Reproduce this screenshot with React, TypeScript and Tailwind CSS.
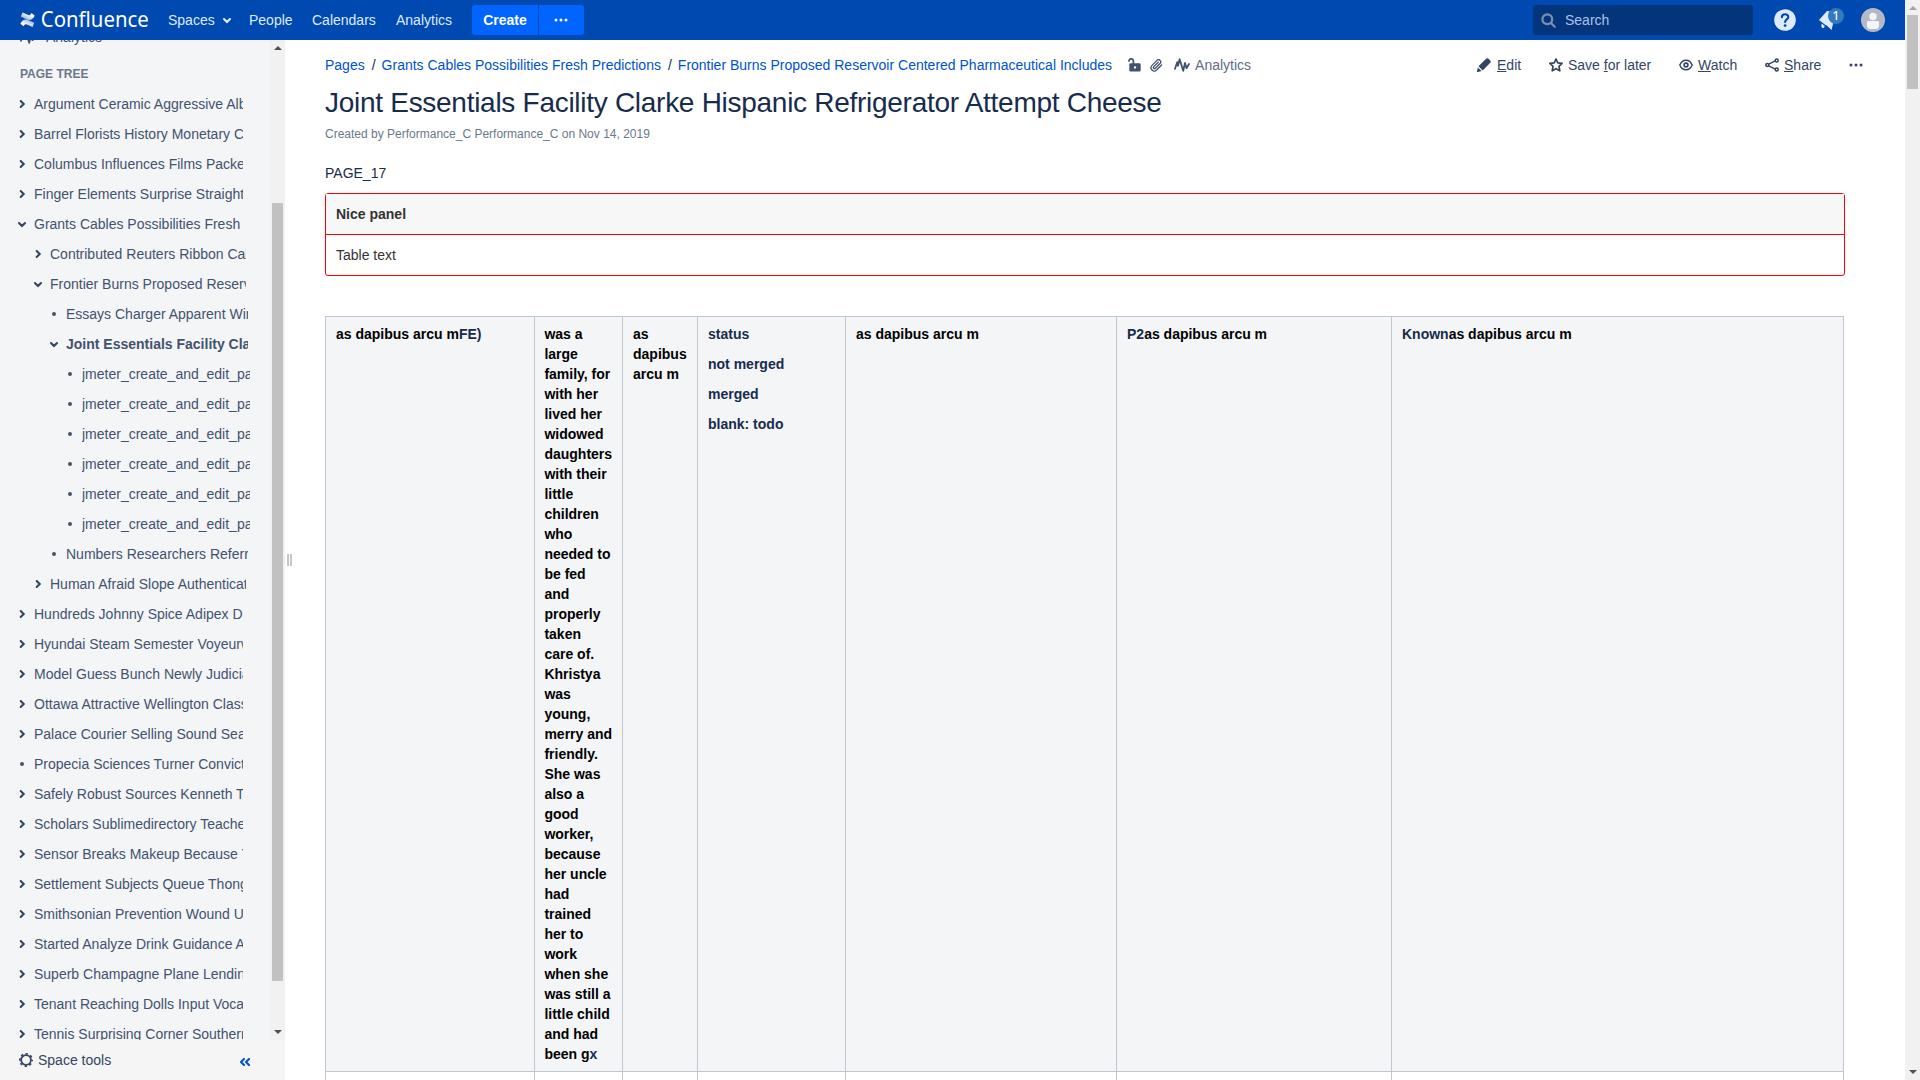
import type { ReactNode } from "react";

type Kind = "closed" | "open" | "leaf";
type TreeRow = { label: string; kind: Kind; depth: 0 | 1 | 2 | 3; current?: boolean };

const JMETER: TreeRow[] = Array.from({ length: 6 }, () => ({
  label: "jmeter_create_and_edit_page",
  kind: "leaf",
  depth: 3,
}));

const TREE: TreeRow[] = [
  { label: "Argument Ceramic Aggressive Albums", kind: "closed", depth: 0 },
  { label: "Barrel Florists History Monetary Crude", kind: "closed", depth: 0 },
  { label: "Columbus Influences Films Packet", kind: "closed", depth: 0 },
  { label: "Finger Elements Surprise Straight", kind: "closed", depth: 0 },
  { label: "Grants Cables Possibilities Fresh", kind: "open", depth: 0 },
  { label: "Contributed Reuters Ribbon Calm", kind: "closed", depth: 1 },
  { label: "Frontier Burns Proposed Reservoir", kind: "open", depth: 1 },
  { label: "Essays Charger Apparent Winds", kind: "leaf", depth: 2 },
  { label: "Joint Essentials Facility Clarke", kind: "open", depth: 2, current: true },
  ...JMETER,
  { label: "Numbers Researchers Referred", kind: "leaf", depth: 2 },
  { label: "Human Afraid Slope Authentication", kind: "closed", depth: 1 },
  { label: "Hundreds Johnny Spice Adipex D", kind: "closed", depth: 0 },
  { label: "Hyundai Steam Semester Voyeurweb", kind: "closed", depth: 0 },
  { label: "Model Guess Bunch Newly Judicial", kind: "closed", depth: 0 },
  { label: "Ottawa Attractive Wellington Classes", kind: "closed", depth: 0 },
  { label: "Palace Courier Selling Sound Search", kind: "closed", depth: 0 },
  { label: "Propecia Sciences Turner Convicted", kind: "leaf", depth: 0 },
  { label: "Safely Robust Sources Kenneth T", kind: "closed", depth: 0 },
  { label: "Scholars Sublimedirectory Teachers", kind: "closed", depth: 0 },
  { label: "Sensor Breaks Makeup Because Y", kind: "closed", depth: 0 },
  { label: "Settlement Subjects Queue Thongs", kind: "closed", depth: 0 },
  { label: "Smithsonian Prevention Wound U", kind: "closed", depth: 0 },
  { label: "Started Analyze Drink Guidance A", kind: "closed", depth: 0 },
  { label: "Superb Champagne Plane Lending", kind: "closed", depth: 0 },
  { label: "Tenant Reaching Dolls Input Vocals", kind: "closed", depth: 0 },
  { label: "Tennis Surprising Corner Southern", kind: "closed", depth: 0 },
];

const DEPTH = [
  { pad: "pl-4", clip: "w-[209px]" },
  { pad: "pl-8", clip: "w-[196px]" },
  { pad: "pl-12", clip: "w-[182px]" },
  { pad: "pl-16", clip: "w-[168px]" },
];

function Chevron({ down = false, className = "" }: { down?: boolean; className?: string }) {
  return (
    <svg viewBox="0 0 12 12" className={`h-3 w-3 ${className}`} fill="none" stroke="currentColor" strokeWidth="2.1" strokeLinecap="round">
      <path d={down ? "M3 5l3 3 3-3" : "M4.7 3l3 3-3 3"} />
    </svg>
  );
}

function Dots({ className = "" }: { className?: string }) {
  return (
    <svg viewBox="0 0 14 4" className={`h-1 w-3.5 ${className}`} fill="currentColor">
      <circle cx="2" cy="2" r="1.5" />
      <circle cx="7" cy="2" r="1.5" />
      <circle cx="12" cy="2" r="1.5" />
    </svg>
  );
}

function Pulse({ className = "" }: { className?: string }) {
  return (
    <svg viewBox="0 0 16 14" className={className} fill="none" stroke="currentColor" strokeWidth="1.8" strokeLinecap="round" strokeLinejoin="round">
      <path d="M1 10.800L3.200 4.200l.8 3.600L5.600 1.200l3.600 11.600L11 5l1.500 5.200L15 6" />
    </svg>
  );
}

function Header() {
  return (
    <header className="flex h-10 shrink-0 items-center bg-[#0049b0] text-sm text-[#deebff]">
      <svg viewBox="0 0 130 24" className="ml-5 h-6 w-[130px] shrink-0">
        <defs>
          <linearGradient id="lower" x1="0" y1="1" x2="1" y2="0">
            <stop offset="0.3" stopColor="#fff" />
            <stop offset="1" stopColor="#fff" stopOpacity="0.45" />
          </linearGradient>
          <linearGradient id="upper" x1="1" y1="0" x2="0" y2="1">
            <stop offset="0.3" stopColor="#fff" />
            <stop offset="1" stopColor="#fff" stopOpacity="0.45" />
          </linearGradient>
        </defs>
        <path d="M.3 15.700c2.700-4.600 5-5.100 9-3.200l5 2.300-1.800 4.100-4.600-2.100c-2.200-1-3.100-.7-4.400 1.400z" fill="url(#lower)" />
        <path d="M14.700 7.700c-2.700 4.600-5 5.100-9 3.200L.8 8.500l1.800-4.100 4.600 2.200c2.200 1 3.100.7 4.400-1.500z" fill="url(#upper)" />
        <text x="20.800" y="18.700" fill="#fff" fontSize="21" textLength="108" lengthAdjust="spacingAndGlyphs" style={{ fontFamily: '"Noto Sans", sans-serif' }}>
          Confluence
        </text>
      </svg>
      <nav className="ml-[18px] flex items-center whitespace-nowrap">
        <span className="flex w-[81px] items-center">
          Spaces
          <Chevron down className="ml-[6px]" />
        </span>
        <span className="w-[63px]">People</span>
        <span className="w-[84px]">Calendars</span>
        <span className="w-[76px]">Analytics</span>
      </nav>
      <div className="flex h-[30px] gap-px overflow-hidden rounded-[3px] text-white">
        <span className="flex w-[66px] items-center justify-center bg-[#0065ff] font-bold">Create</span>
        <span className="flex w-[45px] items-center justify-center bg-[#0065ff] pr-[2px]">
          <Dots />
        </span>
      </div>
      <div className="mr-[21px] ml-auto flex h-[30px] w-[220px] items-center rounded-[3px] bg-[#04347c] pl-2 text-[#abc3e6]">
        <svg viewBox="0 0 15 15" className="mr-[9px] h-[15px] w-[15px] text-[#7f90ae]" fill="none" stroke="currentColor" strokeWidth="2.200" strokeLinecap="round">
          <circle cx="6.300" cy="6.300" r="4.900" />
          <path d="M10.200 10.200l3.500 3.500" />
        </svg>
        Search
      </div>
      <svg viewBox="0 0 22 22" className="h-[22px] w-[22px]" fill="none">
        <circle cx="11" cy="11" r="10.800" fill="#deebff" />
        <path d="M7.900 8.200c0-4 6.400-3.900 6.400-.2 0 2.400-3.200 2.500-3.200 5" stroke="#0049b0" strokeWidth="2.100" strokeLinecap="round" />
        <circle cx="11.100" cy="16.600" r="1.400" fill="#0049b0" />
      </svg>
      <div className="relative ml-[23px] h-6 w-6">
        <svg viewBox="0 0 24 24" className="h-6 w-6" fill="#deebff">
          <path d="M0 12L8 3l7.500 1L15 12l-2.500 10L7.800 17.500 6.500 17z" />
          <path d="M2.700 15.500l3 2.600-.8 1.900H3.300l-1-1.500z" />
        </svg>
        <span className="absolute top-0 left-[9px] flex h-4 w-4 items-center justify-center rounded-full bg-[#3579bd] text-xs leading-none font-medium text-white" style={{ fontFamily: '"Noto Sans", sans-serif' }}>1</span>
      </div>
      <svg viewBox="0 0 24 24" className="mr-5 ml-[18px] h-6 w-6">
        <circle cx="12" cy="12" r="12" fill="#b3bac5" />
        <circle cx="12" cy="8.500" r="3.700" fill="#f4f5f7" />
        <path d="M6 14.500c0-.9.600-1.500 1.500-1.500h9c.9 0 1.500.6 1.500 1.500V18c0 2-1.500 3-3 3H9c-1.500 0-3-1-3-3z" fill="#f4f5f7" />
      </svg>
    </header>
  );
}

function Sidebar() {
  return (
    <aside className="flex w-[285px] shrink-0 flex-col bg-[#f4f5f7] text-sm text-[#42526e]">
      <div className="flex h-[1000px] overflow-hidden">
        <div className="w-[270px]">
          <div className="-mt-[13px] flex h-5 items-center pl-5">
            <Pulse className="mr-[10px] h-3.5 w-4" />
            Analytics
          </div>
          <div className="mt-[17px] mb-[5px] pl-5 text-xs leading-5 font-bold text-[#6b778c]">PAGE TREE</div>
          {TREE.map((row, i) => (
            <div key={i} className={`flex h-[30px] items-center ${DEPTH[row.depth].pad}`}>
              {row.kind === "leaf" ? (
                <span className="mr-[10px] ml-1 h-1 w-1 shrink-0 rounded-full bg-[#42526e]" />
              ) : (
                <Chevron down={row.kind === "open"} className="mr-1.5 shrink-0 text-[#344563]" />
              )}
              <span className={`shrink-0 overflow-hidden leading-5 whitespace-nowrap ${DEPTH[row.depth].clip} ${row.current ? "font-bold" : ""}`}>{row.label}</span>
            </div>
          ))}
        </div>
        <div className="flex w-[15px] flex-col items-center bg-[#f1f1f1]">
          <svg viewBox="0 0 8 4" className="mt-1.5 h-1 w-2" fill="#505050"><path d="M4 0l4 4H0z" /></svg>
          <div className="mt-[153px] h-[778px] w-[11px] bg-[#c1c1c1]" />
          <svg viewBox="0 0 8 4" className="mt-[49px] h-1 w-2" fill="#505050"><path d="M4 4l4-4H0z" /></svg>
        </div>
      </div>
      <div className="flex h-10 items-center bg-[#f5f5f5] pl-[19px] text-[#344563]">
        <svg viewBox="0 0 14 14" className="mr-[5px] h-3.5 w-3.5" fill="none" stroke="currentColor">
          <circle cx="7" cy="7" r="4.900" strokeWidth="1.800" />
          <circle cx="7" cy="7" r="6.200" strokeWidth="1.600" strokeDasharray="2.400 2.470" strokeDashoffset="1.200" />
        </svg>
        Space tools
        <svg viewBox="0 0 10 8" className="mt-[3px] mr-[35px] ml-auto h-2 w-2.5" fill="none" stroke="#0052cc" strokeWidth="2.100" strokeLinecap="round" strokeLinejoin="round">
          <path d="M4 1L1 4l3 3M9 1L6 4l3 3" />
        </svg>
      </div>
    </aside>
  );
}

function Action({ icon, gap, className, children }: { icon: ReactNode; gap: string; className: string; children: ReactNode }) {
  return (
    <span className={`flex items-center whitespace-nowrap ${gap} ${className}`}>
      {icon}
      <span>{children}</span>
    </span>
  );
}

const U = ({ children }: { children: string }) => <span className="underline">{children}</span>;

function Toolbar() {
  const box = "h-3.5 w-3.5 shrink-0";
  return (
    <div className="flex h-5 items-center text-sm">
      <div className="flex items-center whitespace-nowrap text-[#0052cc]">
        <span>Pages</span>
        <span className="mr-[6px] ml-[7px] text-[#172b4d]">/</span>
        <span>Grants Cables Possibilities Fresh Predictions</span>
        <span className="mr-[6px] ml-[7px] text-[#172b4d]">/</span>
        <span>Frontier Burns Proposed Reservoir Centered Pharmaceutical Includes</span>
      </div>
      <div className="ml-4 flex items-center text-[#42526e]">
        <svg viewBox="0 0 13 14" className="h-3.5 w-[13px]" fill="none">
          <path d="M1 3.800V3a2.200 2.200 0 0 1 4.400 0V6" stroke="currentColor" strokeWidth="1.700" />
          <path fillRule="evenodd" clipRule="evenodd" d="M2.500 5.300h9a1.200 1.200 0 0 1 1.200 1.200v5.800a1.200 1.200 0 0 1-1.200 1.200h-9a1.200 1.200 0 0 1-1.200-1.200V6.500a1.200 1.200 0 0 1 1.200-1.200zM7 8.200a1.200 1.200 0 1 0 0 2.400 1.200 1.200 0 0 0 0-2.400z" fill="currentColor" />
        </svg>
        <svg viewBox="0 0 24 24" className="ml-[9px] h-[13px] w-[13px]" fill="none" stroke="currentColor" strokeWidth="2.400" strokeLinecap="round">
          <path d="M21.400 11l-9.200 9.200a6 6 0 0 1-8.500-8.500l9.200-9.200a4 4 0 0 1 5.700 5.700l-9.200 9.200a2 2 0 0 1-2.800-2.800l8.500-8.500" />
        </svg>
        <Pulse className="ml-[11px] h-3.5 w-4" />
        <span className="ml-[5px] text-[#5e6c84]">Analytics</span>
      </div>
      <div className="ml-auto flex items-center text-[#344563]">
        <Action className="w-[72px]" gap="gap-[6px]" icon={
          <svg viewBox="0 0 14 14" className={box} fill="currentColor">
            <path d="M1.500 8.300L8.800 1a2.200 2.200 0 0 1 3 0L13 2.200a2 2 0 0 1 0 2.900l-7.300 7.300zM.9 9.400L4.600 13 .9 14a.8.8 0 0 1-.9-1z" />
          </svg>
        }><U>E</U>dit</Action>
        <Action className="w-[130px]" gap="gap-[5px]" icon={
          <svg viewBox="0 0 14 14" className={box} fill="none" stroke="currentColor" strokeWidth="1.700" strokeLinejoin="round">
            <path d="M7 1l1.800 3.900 4.300.5-3.100 3 .8 4.400L7 10.700l-3.800 2.100.8-4.400-3.100-3 4.300-.5z" />
          </svg>
        }>Save <U>f</U>or later</Action>
        <Action className="w-[86px]" gap="gap-[5px]" icon={
          <svg viewBox="0 0 14 14" className={box} fill="none" stroke="currentColor" strokeWidth="1.400">
            <path d="M.8 7C3.500.6 10.500.6 13.200 7 10.500 13.400 3.500 13.400.8 7z" />
            <circle cx="7" cy="7" r="1.900" strokeWidth="1.600" />
          </svg>
        }><U>W</U>atch</Action>
        <Action className="w-[84px]" gap="gap-[5px]" icon={
          <svg viewBox="0 0 14 14" className={box} fill="none" stroke="currentColor" strokeWidth="1.500">
            <path d="M10.300 2.900L3.700 6.200M3.700 7.800l6.600 3.300" />
            <circle cx="2.300" cy="7" r="1.500" />
            <circle cx="11.700" cy="2.400" r="1.500" />
            <circle cx="11.700" cy="11.600" r="1.500" />
          </svg>
        }><U>S</U>hare</Action>
        <Dots />
      </div>
    </div>
  );
}

function Content() {
  return (
    <main className="flex min-w-0 flex-1 overflow-hidden bg-white">
      <div className="flex w-10 shrink-0 items-start gap-px pt-[514px] pl-[2px]">
        <div className="h-3 w-[2px] bg-[#c1c7d0]" />
        <div className="h-3 w-[2px] bg-[#c1c7d0]" />
      </div>
      <div className="w-[1520px] shrink-0 pt-[15px] text-sm leading-5 text-[#172b4d]">
        <div className="w-[1538px]"><Toolbar /></div>
        <h1 className="mt-3 text-[28px] leading-8 tracking-[-0.28px] whitespace-nowrap">
          Joint Essentials Facility Clarke Hispanic Refrigerator Attempt Cheese
        </h1>
        <p className="mt-[5px] text-xs leading-5 text-[#6b778c]">Created by Performance_C Performance_C on Nov 14, 2019</p>
        <p className="mt-[19px]">PAGE_17</p>
        <section className="mt-[10px] rounded-[3px] border border-[#ff0000] text-[#333]">
          <div className="border-b border-[#ff0000] bg-[#f7f7f7] p-[10px] font-bold">Nice panel</div>
          <div className="p-[10px]">Table text</div>
        </section>
        <table className="mt-10 w-[1518px] table-fixed border-collapse text-left font-bold text-[#172b4d] [&_td]:h-10 [&_td]:border [&_td]:border-[#c1c7d0] [&_th]:border [&_th]:border-[#c1c7d0] [&_th]:bg-[#f4f5f7] [&_th]:px-[10px] [&_th]:py-[7px] [&_th]:align-top">
          <colgroup>
            <col className="w-[209px]" />
            <col className="w-[88px]" />
            <col className="w-[75px]" />
            <col className="w-[148px]" />
            <col className="w-[271px]" />
            <col className="w-[275px]" />
            <col className="w-[452px]" />
          </colgroup>
          <tbody>
            <tr>
              <th><span className="text-black">as dapibus arcu m</span>FE)</th>
              <th>
                <span className="-mr-2 -ml-[0.6px] block"><span className="text-black">
                  was a<br />large<br />family, for<br />with her<br />lived her<br />widowed<br />daughters<br />with their<br />little<br />children<br />who<br />needed to<br />be fed<br />and<br />properly<br />taken<br />care of.<br />Khristya<br />was<br />young,<br />merry and<br />friendly.<br />She was<br />also a<br />good<br />worker,<br />because<br />her uncle<br />had<br />trained<br />her to<br />work<br />when she<br />was still a<br />little child<br />and had<br />been g</span>x</span>
              </th>
              <th className="text-black">as<br />dapibus<br />arcu m</th>
              <th>
                <p>status</p>
                <p className="mt-[10px]">not merged</p>
                <p className="mt-[10px]">merged</p>
                <p className="mt-[10px]">blank: todo</p>
              </th>
              <th className="text-black">as dapibus arcu m</th>
              <th>P2<span className="text-black">as dapibus arcu m</span></th>
              <th>Known<span className="text-black">as dapibus arcu m</span></th>
            </tr>
            <tr>
              <td /><td /><td /><td /><td /><td /><td />
            </tr>
          </tbody>
        </table>
      </div>
    </main>
  );
}

export default function App() {
  return (
    <div className="flex h-[1080px] w-[1920px] overflow-hidden bg-white" style={{ fontFamily: '"Liberation Sans", Arial, sans-serif' }}>
      <div className="flex w-[1905px] flex-col">
        <Header />
        <div className="flex h-[1040px]">
          <Sidebar />
          <Content />
        </div>
      </div>
      <div className="flex w-[15px] flex-col items-center bg-[#f1f1f1]">
        <svg viewBox="0 0 8 4" className="mt-1.5 h-1 w-2" fill="#a3a3a3"><path d="M4 0l4 4H0z" /></svg>
        <div className="mt-[5px] h-[74px] w-[11px] bg-[#c1c1c1]" />
        <svg viewBox="0 0 8 4" className="mt-auto mb-1.5 h-1 w-2" fill="#505050"><path d="M4 4l4-4H0z" /></svg>
      </div>
    </div>
  );
}
